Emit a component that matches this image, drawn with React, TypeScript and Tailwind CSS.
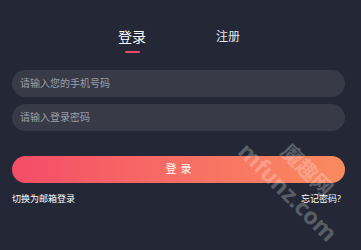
import React from "react";

export default function App() {
  return (
    <div
      className="relative w-[361px] h-[250px] overflow-hidden bg-[#242836] pl-3 pr-4"
      style={{ fontFamily: '"Noto Sans", "Noto Sans CJK SC", sans-serif' }}
    >
      <div className="flex pt-[27px] h-[70px] pl-[106px] gap-[70px]">
        <div className="flex flex-col items-center">
          <span className="text-[14px] leading-[20px] text-white">登录</span>
          <span className="mt-[4px] w-[15px] h-[2px] rounded-full bg-[#ea4a69]" />
        </div>
        <div className="flex flex-col items-center">
          <span className="text-[12px] leading-[20px] text-[#e6e7ea]">注册</span>
        </div>
      </div>
      <div className="flex flex-col gap-[7px]">
        <div className="h-[27px] rounded-full bg-[#383b47] flex items-center px-2">
          <span className="text-[10px] text-[#9c9ea6]">请输入您的手机号码</span>
        </div>
        <div className="h-[27px] rounded-full bg-[#383b47] flex items-center px-2">
          <span className="text-[10px] text-[#9c9ea6]">请输入登录密码</span>
        </div>
      </div>
      <div className="mt-[25px] h-[27px] rounded-full bg-gradient-to-r from-[#f44c67] to-[#f98a5f] flex items-center justify-center">
        <span className="text-[11px] text-white tracking-[4px] pl-[4px]">登录</span>
      </div>
      <div className="mt-[9px] pr-1 flex justify-between text-[9px] leading-[14px] text-white">
        <span>切换为邮箱登录</span>
        <span>忘记密码?</span>
      </div>
      <div className="pointer-events-none absolute left-[288px] top-[192px] -translate-x-1/2 -translate-y-1/2 rotate-45 whitespace-nowrap text-[23px] font-bold text-white/25 leading-none">
        mfunz.com
      </div>
      <div className="pointer-events-none absolute left-[307px] top-[170px] -translate-x-1/2 -translate-y-1/2 rotate-45 whitespace-nowrap text-[21px] font-bold text-white/25 leading-none">
        魔趣网
      </div>
    </div>
  );
}
